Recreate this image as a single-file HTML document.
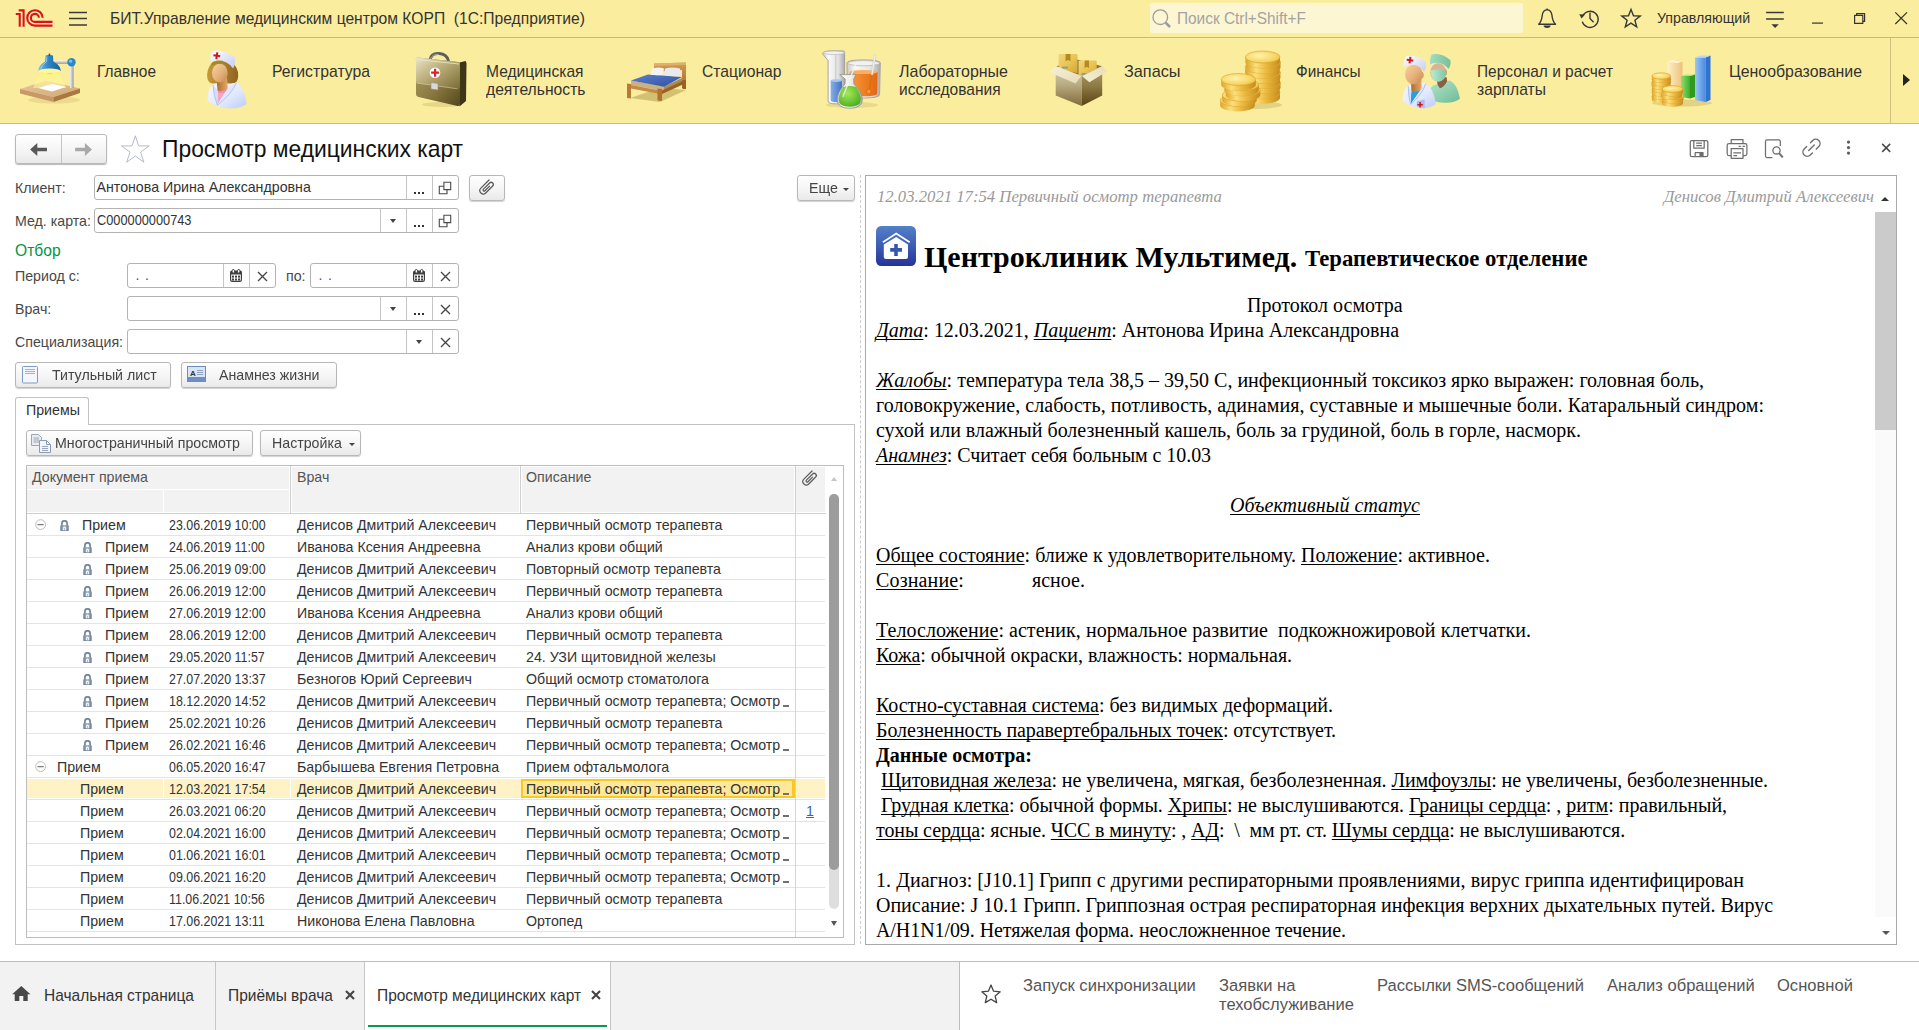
<!DOCTYPE html>
<html><head><meta charset="utf-8"><title>1C</title>
<style>
*{box-sizing:border-box;margin:0;padding:0}
html,body{width:1919px;height:1030px;overflow:hidden;background:#fff}
body{position:relative;font-family:"Liberation Sans",sans-serif;color:#333;font-size:14.2px}
.abs{position:absolute}
.sf{font-size:14.2px}
#tb{left:0;top:0;width:1919px;height:38px;background:#FBED9E;border-bottom:1px solid #ccb96c}
#nav{left:0;top:38px;width:1919px;height:86px;background:#FBED9E;border-bottom:1px solid #cabd80}
.tt{font-size:16.6px;transform:scaleX(.942);transform-origin:0 0;color:#333;white-space:pre}
.nl{position:absolute;margin-top:1px;font-size:16.6px;transform:scaleX(.948);transform-origin:0 0;line-height:18px;color:#333;white-space:pre}
.inp{position:absolute;height:25px;border:1px solid #b3b3b3;border-radius:3px;background:#fff}
.inp .sep{position:absolute;top:0;bottom:0;width:1px;background:#c4c4c4}
.inp .tx{position:absolute;left:1.5px;top:0;line-height:23px;font-size:14.2px;color:#333;white-space:pre}
.lbl{position:absolute;margin-top:-.5px;font-size:14.2px;color:#484848;white-space:pre;line-height:16px}
.btn{position:absolute;border:1px solid #b8b8b8;border-radius:3px;background:linear-gradient(#fff,#f4f4f4 60%,#e9e9e9);box-shadow:0 1px 1px rgba(0,0,0,.18);font-size:14.2px;color:#444;white-space:pre}
.ic{position:absolute}
.btn span{will-change:transform}
.dots{position:absolute;font-size:14px;font-weight:bold;color:#444;letter-spacing:0px}
.row{position:absolute;left:27px;width:798px;height:22px;border-bottom:1px solid #e4e4e4}
.row span{position:absolute;top:1px;line-height:21px;font-size:14.2px;color:#333;white-space:pre}
.doc{font-family:"Liberation Serif",serif;color:#000}
.dl{position:absolute;left:876px;font-family:"Liberation Serif",serif;font-size:20px;line-height:25px;color:#000;white-space:pre}
.dl u{text-decoration:underline;text-decoration-skip-ink:none;text-underline-offset:2px;text-decoration-thickness:1px}
.bt{position:absolute;font-size:16.2px;transform:scaleX(.957);transform-origin:0 0;color:#333;white-space:pre;line-height:18px}
.bl{position:absolute;font-size:17.2px;transform:scaleX(.963);transform-origin:0 0;color:#555;white-space:pre;line-height:20px}
</style></head>
<body>
<div id="tb" class="abs">
<svg class="abs" style="left:0;top:0" width="100" height="38" viewBox="0 0 100 38">
<g fill="none" stroke="#d8131c" stroke-width="2.1">
<path d="M15.8 14 H19.75 V26.8"/>
<path d="M18.7 10.35 H23.6 V26.8"/>
<path d="M38.9 17.7 A4 4 0 1 0 34.8 21.9 H52.5"/>
<path d="M42.6 17.7 A7.7 7.7 0 1 0 34.8 25.6 H52.5"/>
</g>
<g stroke="#3a3a3a" stroke-width="1.5"><path d="M69 12.4 H87 M69 18.6 H87 M69 24.9 H87"/></g>
</svg>
<div class="abs tt" style="left:110px;top:9px;line-height:19px">БИТ.Управление медицинским центром КОРП  (1С:Предприятие)</div>
<div class="abs" style="left:1150px;top:3px;width:373px;height:30px;background:#FDF6D3;border-radius:2px"></div><div class="abs" style="left:1177px;top:9px;font-size:16.6px;transform:scaleX(.927);transform-origin:0 0;line-height:19px;color:#a3a3a3;white-space:pre">Поиск Ctrl+Shift+F</div>
<svg class="abs" style="left:1140px;top:0" width="779" height="38" viewBox="1140 0 779 38">
<g fill="none" stroke="#9c9c9c"><circle cx="1160.3" cy="17.2" r="7.3" stroke-width="1.3"/><path d="M1165.6 22.6 L1170 27" stroke-width="2.6"/></g>
<g fill="none" stroke="#383838" stroke-width="1.4" stroke-linejoin="round">
<path d="M1538.7 24.2 C1541.6 21.6 1542 18 1542.3 15 C1542.8 11.6 1544.8 9.9 1547.1 9.9 C1549.4 9.9 1551.4 11.6 1551.9 15 C1552.2 18 1552.6 21.6 1555.5 24.2 Z"/>
<path d="M1547.1 8.6 V9.9"/>
<path d="M1583 15.4 A8.1 8.1 0 1 1 1582.3 21.6"/>
<path d="M1590 12.6 V18.6 L1593.6 22.2"/>
<path d="M1631 9.4 L1633.5 15.8 L1640.2 16.1 L1634.9 20.3 L1636.7 26.8 L1631 23.1 L1625.3 26.8 L1627.1 20.3 L1621.8 16.1 L1628.5 15.8 Z" stroke-linejoin="miter"/>
</g>
<path d="M1543.6 25.6 H1550.6 A3.5 2.3 0 0 1 1543.6 25.6 Z" fill="#383838"/>
<path d="M1579.2 14.3 L1585 14.6 L1581.6 18.6 Z" fill="#383838"/>
<g stroke="#383838" stroke-width="1.3" fill="none"><path d="M1766.1 12.5 H1783.8 M1766.1 19 H1783.8"/></g>
<path d="M1771.4 24.2 H1778.8 L1775.1 28 Z" fill="#383838"/>
<g stroke="#333" stroke-width="1.2" fill="none"><path d="M1812 23.1 H1823"/>
<path d="M1854.6 15.3 H1862.8 V23.4 H1854.6 Z" stroke-linejoin="round"/><path d="M1856.6 15 V13.6 H1864.6 V21.4 H1863"  stroke-linejoin="round"/>
<path d="M1895.3 12.4 L1907 24 M1907 12.4 L1895.3 24"/></g>
</svg>
<div class="abs" style="font-size:14.2px;left:1657px;top:9px;line-height:19px;color:#333;white-space:pre">Управляющий</div>
</div>
<div id="nav" class="abs">
<svg class="abs" style="left:0;top:0" width="1919" height="86" viewBox="0 38 1919 86"><defs>
<linearGradient id="cedge" x1="0" x2="1" y1="0" y2="0"><stop offset="0" stop-color="#dfa32a"/><stop offset=".3" stop-color="#fbe07a"/><stop offset=".6" stop-color="#ebb83e"/><stop offset="1" stop-color="#c68c1e"/></linearGradient>
<radialGradient id="ctop" cx=".4" cy=".4" r=".8"><stop offset="0" stop-color="#fff3b0"/><stop offset=".6" stop-color="#f7d561"/><stop offset="1" stop-color="#e7b23c"/></radialGradient>
<linearGradient id="skin" x1="0" x2="1" y1="0" y2="1"><stop offset="0" stop-color="#f8d2a0"/><stop offset=".55" stop-color="#e6b07a"/><stop offset="1" stop-color="#c08a52"/></linearGradient>
<linearGradient id="neck" x1="0" x2="1"><stop offset="0" stop-color="#a96a2c"/><stop offset=".6" stop-color="#d1914e"/><stop offset="1" stop-color="#e2a869"/></linearGradient>
<linearGradient id="coat" x1="0" x2="1" y1="0" y2="1"><stop offset="0" stop-color="#f4f7ff"/><stop offset=".55" stop-color="#e3eafd"/><stop offset="1" stop-color="#bccbf6"/></linearGradient>
<linearGradient id="capg" x1="0" x2="1" y1="0" y2="1"><stop offset="0" stop-color="#ffffff"/><stop offset="1" stop-color="#c3cdf0"/></linearGradient>
<linearGradient id="hair" x1="0" x2="1"><stop offset="0" stop-color="#c99a3a"/><stop offset="1" stop-color="#8e6420"/></linearGradient>
<linearGradient id="bagf" x1="0" x2="1" y1="0" y2="1"><stop offset="0" stop-color="#ebe5c9"/><stop offset=".45" stop-color="#b9ac78"/><stop offset="1" stop-color="#7a6a32"/></linearGradient>
<linearGradient id="bagb" x1="0" x2="1" y1="0" y2="1"><stop offset="0" stop-color="#b0a26c"/><stop offset=".55" stop-color="#8a7a40"/><stop offset="1" stop-color="#55471c"/></linearGradient>
<linearGradient id="wood" x1="0" x2="0" y1="0" y2="1"><stop offset="0" stop-color="#d39a52"/><stop offset="1" stop-color="#a86d2b"/></linearGradient>
<linearGradient id="boardt" x1="0" x2="1" y1="0" y2="1"><stop offset="0" stop-color="#e7c79a"/><stop offset="1" stop-color="#d2a873"/></linearGradient>
<linearGradient id="shade" x1="0" x2="1"><stop offset="0" stop-color="#7fc0e6"/><stop offset=".45" stop-color="#2f86c4"/><stop offset="1" stop-color="#175f9c"/></linearGradient>
<linearGradient id="metal" x1="0" x2="1"><stop offset="0" stop-color="#f2f2f2"/><stop offset="1" stop-color="#9a9a9a"/></linearGradient>
<linearGradient id="metalv" x1="0" x2="0" y1="0" y2="1"><stop offset="0" stop-color="#f2f2f2"/><stop offset="1" stop-color="#9a9a9a"/></linearGradient>
<linearGradient id="light" x1="0" x2="0" y1="0" y2="1"><stop offset="0" stop-color="#fff176"/><stop offset="1" stop-color="#fff7b0" stop-opacity=".55"/></linearGradient>
<linearGradient id="glass" x1="0" x2="1"><stop offset="0" stop-color="#c9c9c9"/><stop offset=".25" stop-color="#fafafa"/><stop offset=".7" stop-color="#e4e4e4"/><stop offset="1" stop-color="#a9a9a9"/></linearGradient>
<linearGradient id="orange" x1="0" x2="1"><stop offset="0" stop-color="#f79a3a"/><stop offset="1" stop-color="#e5670f"/></linearGradient>
<radialGradient id="green" cx=".4" cy=".35" r=".8"><stop offset="0" stop-color="#a4ea5a"/><stop offset="1" stop-color="#3ea516"/></radialGradient>
<linearGradient id="blueliq" x1="0" x2="1"><stop offset="0" stop-color="#86b0e8"/><stop offset="1" stop-color="#3f73c4"/></linearGradient>
<linearGradient id="boxl" x1="0" x2="0" y1="0" y2="1"><stop offset="0" stop-color="#d6cdaa"/><stop offset=".45" stop-color="#b9ad84"/><stop offset="1" stop-color="#826a38"/></linearGradient>
<linearGradient id="boxr" x1="0" x2="0" y1="0" y2="1"><stop offset="0" stop-color="#b3a472"/><stop offset=".5" stop-color="#8d7a44"/><stop offset="1" stop-color="#5a4212"/></linearGradient>
<linearGradient id="flapl" x1="0" x2="1" y1="0" y2="1"><stop offset="0" stop-color="#f7f1d8"/><stop offset="1" stop-color="#e4dbb8"/></linearGradient>
<linearGradient id="flapr" x1="0" x2="1" y1="1" y2="0"><stop offset="0" stop-color="#f6f0d6"/><stop offset="1" stop-color="#e6dcb6"/></linearGradient>
<linearGradient id="ybox" x1="0" x2="1" y1="0" y2="1"><stop offset="0" stop-color="#f3d77a"/><stop offset=".5" stop-color="#e9c455"/><stop offset="1" stop-color="#d3a632"/></linearGradient>
<linearGradient id="mask" x1="0" x2="1"><stop offset="0" stop-color="#b9ead3"/><stop offset="1" stop-color="#7fc7a3"/></linearGradient>
<linearGradient id="gcap" x1="0" x2="1"><stop offset="0" stop-color="#a4dcc0"/><stop offset="1" stop-color="#78bf9b"/></linearGradient>
<linearGradient id="gcoat" x1="0" x2="1" y1="0" y2="1"><stop offset="0" stop-color="#b6e6cc"/><stop offset="1" stop-color="#6dbb95"/></linearGradient>
<linearGradient id="bbar" x1="0" x2="1"><stop offset="0" stop-color="#9cc6f7"/><stop offset="1" stop-color="#4a8ae0"/></linearGradient>
<linearGradient id="gbar" x1="0" x2="1"><stop offset="0" stop-color="#8ee070"/><stop offset="1" stop-color="#3fae2a"/></linearGradient>
<linearGradient id="ybar" x1="0" x2="1"><stop offset="0" stop-color="#fff0c8"/><stop offset="1" stop-color="#ecc27a"/></linearGradient>
<linearGradient id="blanket" x1="0" x2="1" y1="0" y2="1"><stop offset="0" stop-color="#5a80cf"/><stop offset="1" stop-color="#2f4f9f"/></linearGradient>
</defs><g><ellipse cx="54" cy="100" rx="26" ry="3.5" fill="#b9a55a" opacity=".25"/><path d="M20 89 L46 80.5 L80 88.5 L53.5 97 Z" fill="url(#boardt)"/><path d="M20 89 L53.5 97 L53.5 102 L20 93.5 Z" fill="#c89866"/><path d="M53.5 97 L80 88.5 L80 93 L53.5 102 Z" fill="#a9773f"/><path d="M41 70 L58 70 L66 88 L33 88 Z" fill="url(#light)"/><path d="M38 88 L52 84 L66 87 L52 91.5 Z" fill="#ffffff"/><rect x="70" y="64" width="3.6" height="24" fill="url(#metal)"/><rect x="53" y="60.5" width="18" height="3.4" fill="url(#metalv)"/><circle cx="71.5" cy="62.3" r="4.2" fill="#2f86c4"/><circle cx="70.6" cy="61.2" r="1.6" fill="#7fc0e6"/><path d="M45.6 56 Q45.6 55 49.3 55 Q53 55 53 56 L53.4 61.5 Q60.5 65.5 60.8 70.8 Q49.5 76 38.2 70.8 Q38.5 65.5 45.2 61.5 Z" fill="url(#shade)"/><path d="M46.8 56.5 L46.6 61.5 Q42 64.5 40.5 69" fill="none" stroke="#a9d8f2" stroke-width="1" opacity=".8"/><rect x="48.6" y="53.6" width="1.6" height="2.4" fill="#175f9c"/><ellipse cx="49.5" cy="71" rx="11" ry="2.6" fill="#fff59a"/></g><g><path d="M212.5 62 Q205.5 70 207.5 79 Q209.5 85 216 83 L231 83.5 Q238 84 238.2 76 Q238.5 67 231 62 Q222 58 212.5 62 Z" fill="url(#hair)"/><path d="M207.6 100.4 Q207.6 88.5 212.5 85 L218 83.5 L230 84 L236.5 82.6 Q244.5 87 246.7 103.8 Q241 108.8 230 108.6 Q216 107.5 207.6 100.4 Z" fill="url(#coat)"/><path d="M216.5 79 L227 78 L227.8 89 L222 96 L217.6 91 Z" fill="url(#neck)"/><path d="M217.6 90.5 Q222 92.5 227.6 88.8 L217.3 104.5 Z" fill="#f7a6c2"/><path d="M217.6 90.5 Q222 92.5 227.6 88.8 L226 91.5 Q221.5 94.3 217.6 92.6 Z" fill="#f47fa8" opacity=".7"/><path d="M213 85 L217.6 90.8 L217.4 105.2 Q213.5 96 213 85 Z" fill="#d6e0fb"/><path d="M236.3 82.8 Q232 94 217.5 105.3 L227.5 88.6 Z" fill="#dfe7fd"/><path d="M213 85 Q213.6 96 217.4 105.2 Q231.5 94.5 236.3 82.8" fill="none" stroke="#a9bdf3" stroke-width=".9"/><ellipse cx="219.8" cy="73" rx="7.9" ry="9.4" fill="url(#skin)"/><path d="M211.5 63.5 Q216 59.8 224 62.3 L224.5 64.5 Q217 62.5 211.6 65.5 Z" fill="#9d8a2d"/><path d="M210.3 62.4 Q210 55 212.3 51.1 Q223 48.8 234.8 57.3 Q236 63 233.1 68.5 Q227.5 60.5 217.4 60 Q213 60.2 210.3 62.4 Z" fill="url(#capg)"/><path d="M215.8 52.3 h2 v2.4 h2.4 v2 h-2.4 v2.4 h-2 v-2.4 h-2.4 v-2 h2.4 z" fill="#cf1820" transform="rotate(8 216.8 55.7)"/></g><g><ellipse cx="442" cy="104.5" rx="20" ry="2.5" fill="#a99446" opacity=".25"/><path d="M430 60 Q431 53 439 53.5 Q447 54 448.5 61" fill="none" stroke="#5d5d5d" stroke-width="3"/><path d="M430.5 59 Q432 54 439 54.3" fill="none" stroke="#a5a5a5" stroke-width="1"/><path d="M459.5 62.5 L465.5 61 Q466.5 62 466.5 64 L466 101 L459.5 106.5 Z" fill="#3f3617"/><path d="M416 60 Q415 57.5 418 57.5 L458 62 Q460 62.2 460 64.5 L460 104 Q460 106.5 457.5 106 L418.5 97 Q416 96.5 416 94 Z" fill="url(#bagb)"/><path d="M416 60 Q415 57.5 418 57.5 L458 62 Q460 62.2 460 64.5 L460 86.5 Q460 89.5 457 89 L418 83.5 Q416 83 416 81 Z" fill="url(#bagf)"/><path d="M417 59.5 L459 64" stroke="#efe8c8" stroke-width="1" fill="none" opacity=".8"/><path d="M416.5 83 L457.5 88.8" stroke="#d9d0a6" stroke-width=".8" fill="none" opacity=".7"/><circle cx="435" cy="72.7" r="5.3" fill="#ffffff"/><path d="M434 68.7 h2.2 v2.9 h2.9 v2.2 h-2.9 v2.9 h-2.2 v-2.9 h-2.9 v-2.2 h2.9 z" fill="#e0202a"/><path d="M431 82.5 L438 83.5 L438 90 L431 89 Z" fill="#d9d9d9" stroke="#8c8c8c" stroke-width=".6"/></g><g><path d="M630 98 L660 102 L686 90 L660 88 Z" fill="#a08c3c" opacity=".45"/><path d="M654 63.5 L686 62.5 L686 88 L682 88 L682 70 L654 72 Z" fill="url(#wood)"/><path d="M654 63.5 L686 62.5 L686 65 L654 66 Z" fill="#e0b06a"/><rect x="682.5" y="80" width="3.5" height="9" fill="#9a6224"/><path d="M631 80.5 L664 86.5 L664 91 L631 85 Z" fill="#c9b184"/><path d="M664 86.5 L682 78 L682 82 L664 91 Z" fill="#a78d5c"/><path d="M631 80.5 L648 74.5 L682 77 L664 86.8 Z" fill="url(#blanket)"/><path d="M652 69 Q658 66.5 664 68.5 L663 74.5 Q657 76 650.5 74.5 Z" fill="#f3f3f3"/><path d="M665 68.5 Q672 66.5 680 68.5 L681 76 Q672 77 664 75 Z" fill="#e9e9ee"/><path d="M627 83.5 L631 84 L631 98.5 L627 98 Z" fill="#b77b35"/><path d="M631 85 L660 90.5 L660 94 L631 88.5 Z" fill="#c48a44"/><path d="M657.5 88.5 L662 89 L662 101 L657.5 100.5 Z" fill="#b0722d"/><path d="M662 90.5 L684 80.5 L684 84 L662 94 Z" fill="#99601f"/></g><g><ellipse cx="852" cy="105" rx="26" ry="3" fill="#a99446" opacity=".22"/><path d="M822.4 53.6 Q823 51.2 830 50.9 L843 50.9 Q845.3 51.2 844.6 53.5 L844.6 101 Q844.6 103.9 836.4 103.9 Q828.1 103.9 828.1 101 L828.1 60.7 Z" fill="url(#glass)" stroke="#9d9d9d" stroke-width=".9"/><path d="M830.7 80.5 L841.9 80.5 L841.9 100 Q841.9 102 836.3 102 Q830.7 102 830.7 100 Z" fill="url(#blueliq)"/><ellipse cx="836.3" cy="80.6" rx="5.6" ry="1.4" fill="#a9c6ef"/><path d="M835.8 55 V80" stroke="#bdbdbd" stroke-width="1.2" opacity=".7"/><ellipse cx="834" cy="52.8" rx="10.5" ry="1.7" fill="#f3f3f3" stroke="#b0b0b0" stroke-width=".6"/><path d="M846.9 63 Q846.9 59.9 863.5 59.9 Q880.3 59.9 880.3 63 L879.6 94.5 Q879.6 98 863.5 98 Q847.6 98 847.6 94.5 Z" fill="url(#glass)" stroke="#9d9d9d" stroke-width=".9" opacity=".95"/><path d="M849.6 72 L877.6 72 L877.2 93.4 Q877.2 96.2 863.5 96.2 Q850 96.2 850 93.4 Z" fill="url(#orange)"/><ellipse cx="863.6" cy="72" rx="14" ry="2.1" fill="#f9ae62"/><ellipse cx="863.6" cy="63.2" rx="15.8" ry="2.6" fill="#f2f2f2" stroke="#b0b0b0" stroke-width=".7"/><path d="M874.2 54.6 L876 54.8 L872.8 75 L871.2 74.8 Z" fill="#efefef" stroke="#c4c4c4" stroke-width=".4"/><path d="M871.8 75 L869.2 90" stroke="#d8700f" stroke-width="1.3" opacity=".9"/><circle cx="868.8" cy="91.6" r="2.3" fill="#f79a3a" stroke="#c9610c" stroke-width=".6"/><path d="M839.7 74.6 L856 74.6 L853.7 79 L853.9 84 Q862.3 92.5 862.3 99.5 Q862.3 108.3 849.6 108.3 Q837.2 108.3 837.2 99.5 Q837.2 92.5 845 84 L845.2 79 Z" fill="url(#glass)" stroke="#959595" stroke-width=".9"/><path d="M843.2 87 Q849.5 85 856 87 Q860.8 93.5 860.8 99.3 Q860.8 106.8 849.6 106.8 Q838.7 106.8 838.7 99.3 Q838.7 93.5 843.2 87 Z" fill="url(#green)"/><path d="M855.3 63 L856.8 63.6 L843.6 97 L842.2 96.4 Z" fill="#f4f4f4" opacity=".8"/></g><g><path d="M1055.7 66.5 L1077 59.5 L1102.2 66.2 L1081.7 76.1 Z" fill="#8a763c"/><path d="M1058.6 55.2 Q1058.6 54 1060 54 L1076 54 Q1077.5 54 1077.5 55.2 L1077.5 73 L1058.6 70 Z" fill="url(#ybox)"/><path d="M1065.6 54 H1070.5 V61.2 L1068 60 L1065.6 61.2 Z" fill="#b48a22"/><path d="M1078.5 61.6 Q1078.5 60.4 1080 60.4 L1095.2 60.4 Q1096.7 60.4 1096.7 61.6 L1096.7 72 L1082 77 L1078.5 75 Z" fill="url(#ybox)"/><path d="M1084.6 60.4 H1089 V68 L1086.8 66.8 L1084.6 68 Z" fill="#b48a22"/><rect x="1062" y="66.6" width="6" height="2" fill="#7fa58c"/><rect x="1081.5" y="73" width="5" height="2" fill="#7fa58c"/><path d="M1055.7 66.5 L1081.7 76.1 L1081.7 105.9 L1055.7 95.4 Z" fill="url(#boxl)"/><path d="M1081.7 76.1 L1102.2 66.2 L1102.2 95.4 L1081.7 105.9 Z" fill="url(#boxr)"/><path d="M1049.3 72.3 L1056.3 66.2 L1081.2 76.1 L1075.6 83.5 Z" fill="url(#flapl)"/><path d="M1082 76.1 L1101.9 66.2 L1107.3 71.3 L1089.4 82.2 Z" fill="url(#flapr)"/></g><g><ellipse cx="1252" cy="105" rx="30" ry="4" fill="#a99446" opacity=".3"/><path d="M1245.4 92.7 v5.1 a17.3 6.0 0 0 0 34.6 0 v-5.1 z" fill="url(#cedge)"/><ellipse cx="1262.7" cy="92.7" rx="17.3" ry="6.0" fill="url(#ctop)" stroke="#d9a02c" stroke-width="0.6"/><path d="M1245.1 87.6 v5.1 a17.3 6.0 0 0 0 34.6 0 v-5.1 z" fill="url(#cedge)"/><ellipse cx="1262.4" cy="87.6" rx="17.3" ry="6.0" fill="url(#ctop)" stroke="#d9a02c" stroke-width="0.6"/><path d="M1245.9 82.5 v5.1 a17.3 6.0 0 0 0 34.6 0 v-5.1 z" fill="url(#cedge)"/><ellipse cx="1263.2" cy="82.5" rx="17.3" ry="6.0" fill="url(#ctop)" stroke="#d9a02c" stroke-width="0.6"/><path d="M1245.4 77.4 v5.1 a17.3 6.0 0 0 0 34.6 0 v-5.1 z" fill="url(#cedge)"/><ellipse cx="1262.7" cy="77.4" rx="17.3" ry="6.0" fill="url(#ctop)" stroke="#d9a02c" stroke-width="0.6"/><path d="M1245.8 72.3 v5.1 a17.3 6.0 0 0 0 34.6 0 v-5.1 z" fill="url(#cedge)"/><ellipse cx="1263.1" cy="72.3" rx="17.3" ry="6.0" fill="url(#ctop)" stroke="#d9a02c" stroke-width="0.6"/><path d="M1245.1 67.2 v5.1 a17.3 6.0 0 0 0 34.6 0 v-5.1 z" fill="url(#cedge)"/><ellipse cx="1262.4" cy="67.2" rx="17.3" ry="6.0" fill="url(#ctop)" stroke="#d9a02c" stroke-width="0.6"/><path d="M1245.9 62.1 v5.1 a17.3 6.0 0 0 0 34.6 0 v-5.1 z" fill="url(#cedge)"/><ellipse cx="1263.2" cy="62.1" rx="17.3" ry="6.0" fill="url(#ctop)" stroke="#d9a02c" stroke-width="0.6"/><path d="M1245.4 57.0 v5.1 a17.3 6.0 0 0 0 34.6 0 v-5.1 z" fill="url(#cedge)"/><ellipse cx="1262.7" cy="57.0" rx="17.3" ry="6.0" fill="url(#ctop)" stroke="#d9a02c" stroke-width="0.6"/><path d="M1220.2 100.3 v5.2 a17.3 6.0 0 0 0 34.6 0 v-5.2 z" fill="url(#cedge)"/><ellipse cx="1237.5" cy="100.3" rx="17.3" ry="6.0" fill="url(#ctop)" stroke="#d9a02c" stroke-width="0.6"/><path d="M1222.2 95.1 v5.2 a17.3 6.0 0 0 0 34.6 0 v-5.2 z" fill="url(#cedge)"/><ellipse cx="1239.5" cy="95.1" rx="17.3" ry="6.0" fill="url(#ctop)" stroke="#d9a02c" stroke-width="0.6"/><path d="M1225.7 89.9 v5.2 a17.3 6.0 0 0 0 34.6 0 v-5.2 z" fill="url(#cedge)"/><ellipse cx="1243.0" cy="89.9" rx="17.3" ry="6.0" fill="url(#ctop)" stroke="#d9a02c" stroke-width="0.6"/><path d="M1224.2 84.7 v5.2 a17.3 6.0 0 0 0 34.6 0 v-5.2 z" fill="url(#cedge)"/><ellipse cx="1241.5" cy="84.7" rx="17.3" ry="6.0" fill="url(#ctop)" stroke="#d9a02c" stroke-width="0.6"/><path d="M1221.2 79.5 v5.2 a17.3 6.0 0 0 0 34.6 0 v-5.2 z" fill="url(#cedge)"/><ellipse cx="1238.5" cy="79.5" rx="17.3" ry="6.0" fill="url(#ctop)" stroke="#d9a02c" stroke-width="0.6"/></g><g><path d="M1428 98 Q1429 89 1433 85.5 L1440 83 L1449.8 80.4 Q1457.5 84 1460 98.8 Q1454 103.2 1445 102.8 Q1434 102.6 1428 98 Z" fill="url(#gcoat)"/><path d="M1436.5 79 L1446.5 77 L1447.2 81 Q1444 87.5 1439.9 88.3 Q1437.2 86 1437 81.6 Z" fill="#8a5f43"/><ellipse cx="1438.2" cy="72.4" rx="7.9" ry="9.3" fill="#d6b596"/><path d="M1445.3 68.5 Q1447.6 70 1446.8 74.5 L1445.3 76 Z" fill="#c79f80"/><path d="M1431 70.6 Q1438 68.4 1445.2 70.8 L1445.8 75 Q1443.5 81.6 1438 81.4 Q1432.6 81 1431.2 75 Z" fill="url(#mask)"/><path d="M1430 64.5 Q1429.8 58 1431.6 54.6 Q1441 52 1450.4 60.2 Q1451.2 65 1448.5 69.1 Q1444 63.2 1437 62.8 Q1432.5 62.8 1430 64.5 Z" fill="url(#gcap)"/><path d="M1402.6 100.8 Q1402.8 89.5 1408.2 85.6 L1413 84 L1421 82 L1426 83.6 Q1433.5 88 1435.9 104.1 Q1430 108.8 1421.4 108.4 Q1409.5 107 1402.6 100.8 Z" fill="url(#coat)"/><path d="M1411 80 L1421.4 78 L1421.6 88.5 L1416 96 L1411.4 91 Z" fill="url(#neck)"/><path d="M1411.2 91.2 Q1416 93 1420.7 89.8 L1410.6 104.3 Z" fill="#2a9fd8"/><path d="M1408.2 85.8 L1411.3 91.2 L1410.6 104.5 Q1408 96 1408.2 85.8 Z" fill="#d6e0fb"/><path d="M1425.8 83.7 Q1422.5 94 1410.7 104.6 L1420.6 89.8 Z" fill="#dfe7fd"/><path d="M1408.2 85.8 Q1408.2 96 1410.6 104.5 Q1422 94.5 1425.8 83.7" fill="none" stroke="#a9bdf3" stroke-width=".9"/><path d="M1416.8 101.2 L1424.7 99.6 L1424.7 108.2 L1416.8 106.6 Z" fill="#a9bdf3"/><path d="M1419.3 102 h1.6 v1.9 h1.9 v1.6 h-1.9 v1.9 h-1.6 v-1.9 h-1.9 v-1.6 h1.9 z" fill="#cf1820"/><ellipse cx="1413.8" cy="74.4" rx="8.8" ry="10" fill="url(#skin)"/><path d="M1421.8 71.5 Q1424.4 72.5 1423.6 77 L1421.8 79 Z" fill="#d9a066"/><path d="M1403.9 67.1 Q1403.6 60 1405.9 56.2 Q1416 53.8 1426 61.8 Q1427 67 1424 72.1 Q1420 65.4 1413.5 64.8 Q1407.5 64.6 1403.9 67.1 Z" fill="url(#capg)"/><path d="M1409 56.9 h2 v2.3 h2.3 v2 h-2.3 v2.3 h-2 v-2.3 h-2.3 v-2 h2.3 z" fill="#cf1820" transform="rotate(8 1410 60.2)"/></g><g><ellipse cx="1682" cy="103" rx="30" ry="3.5" fill="#a99446" opacity=".3"/><path d="M1667.5 61.5 L1677 60 L1682.5 61.5 L1682.5 92 L1667.5 92 Z" fill="url(#ybar)"/><path d="M1667.5 61.5 L1673 60 L1682.5 61.5 L1677 63 Z" fill="#fff6dc"/><path d="M1681 76 L1690 76 L1690 98.5 L1681 97 Z" fill="url(#gbar)"/><path d="M1690 76 L1695 74.5 L1695 97 L1690 98.5 Z" fill="#2f9a20"/><path d="M1681 76 L1686 74.5 L1695 74.5 L1690 76 Z" fill="#a6ea8c"/><path d="M1695 57.5 L1705.5 57.5 L1705.5 102 L1695 100 Z" fill="url(#bbar)"/><path d="M1705.5 57.5 L1710.5 55.5 L1710.5 100 L1705.5 102 Z" fill="#2f72d2"/><path d="M1695 57.5 L1700 55.5 L1710.5 55.5 L1705.5 57.5 Z" fill="#b9d8fa"/><path d="M1651.8 96.4 v3.4 a9.4 3.2 0 0 0 18.8 0 v-3.4 z" fill="url(#cedge)"/><ellipse cx="1661.2" cy="96.4" rx="9.4" ry="3.2" fill="url(#ctop)" stroke="#d9a02c" stroke-width="0.6"/><path d="M1652.1 93.0 v3.4 a9.4 3.2 0 0 0 18.8 0 v-3.4 z" fill="url(#cedge)"/><ellipse cx="1661.5" cy="93.0" rx="9.4" ry="3.2" fill="url(#ctop)" stroke="#d9a02c" stroke-width="0.6"/><path d="M1651.8 89.6 v3.4 a9.4 3.2 0 0 0 18.8 0 v-3.4 z" fill="url(#cedge)"/><ellipse cx="1661.2" cy="89.6" rx="9.4" ry="3.2" fill="url(#ctop)" stroke="#d9a02c" stroke-width="0.6"/><path d="M1652.1 86.2 v3.4 a9.4 3.2 0 0 0 18.8 0 v-3.4 z" fill="url(#cedge)"/><ellipse cx="1661.5" cy="86.2" rx="9.4" ry="3.2" fill="url(#ctop)" stroke="#d9a02c" stroke-width="0.6"/><path d="M1651.6 82.8 v3.4 a9.4 3.2 0 0 0 18.8 0 v-3.4 z" fill="url(#cedge)"/><ellipse cx="1661.0" cy="82.8" rx="9.4" ry="3.2" fill="url(#ctop)" stroke="#d9a02c" stroke-width="0.6"/><path d="M1652.1 79.4 v3.4 a9.4 3.2 0 0 0 18.8 0 v-3.4 z" fill="url(#cedge)"/><ellipse cx="1661.5" cy="79.4" rx="9.4" ry="3.2" fill="url(#ctop)" stroke="#d9a02c" stroke-width="0.6"/><path d="M1651.8 76.0 v3.4 a9.4 3.2 0 0 0 18.8 0 v-3.4 z" fill="url(#cedge)"/><ellipse cx="1661.2" cy="76.0" rx="9.4" ry="3.2" fill="url(#ctop)" stroke="#d9a02c" stroke-width="0.6"/><path d="M1662.0 99.8 v3.6 a10.5 3.4 0 0 0 21.0 0 v-3.6 z" fill="url(#cedge)"/><ellipse cx="1672.5" cy="99.8" rx="10.5" ry="3.4" fill="url(#ctop)" stroke="#d9a02c" stroke-width="0.6"/><path d="M1662.5 96.2 v3.6 a10.5 3.4 0 0 0 21.0 0 v-3.6 z" fill="url(#cedge)"/><ellipse cx="1673.0" cy="96.2" rx="10.5" ry="3.4" fill="url(#ctop)" stroke="#d9a02c" stroke-width="0.6"/><path d="M1661.0 92.6 v3.6 a10.5 3.4 0 0 0 21.0 0 v-3.6 z" fill="url(#cedge)"/><ellipse cx="1671.5" cy="92.6" rx="10.5" ry="3.4" fill="url(#ctop)" stroke="#d9a02c" stroke-width="0.6"/><path d="M1662.0 89.0 v3.6 a10.5 3.4 0 0 0 21.0 0 v-3.6 z" fill="url(#cedge)"/><ellipse cx="1672.5" cy="89.0" rx="10.5" ry="3.4" fill="url(#ctop)" stroke="#d9a02c" stroke-width="0.6"/></g></svg>
<div class="nl" style="left:97.0px;top:24px;transform:scaleX(0.9305)">Главное</div>
<div class="nl" style="left:272.3px;top:24px;transform:scaleX(0.9493)">Регистратура</div>
<div class="nl" style="left:486.3px;top:24px;transform:scaleX(0.9383)">Медицинская</div>
<div class="nl" style="left:486.3px;top:42px;transform:scaleX(0.9452)">деятельность</div>
<div class="nl" style="left:702.3px;top:24px;transform:scaleX(0.9436)">Стационар</div>
<div class="nl" style="left:898.7px;top:24px;transform:scaleX(0.9634)">Лабораторные</div>
<div class="nl" style="left:898.7px;top:42px;transform:scaleX(0.9355)">исследования</div>
<div class="nl" style="left:1124.3px;top:24px;transform:scaleX(0.9791)">Запасы</div>
<div class="nl" style="left:1296.3px;top:24px;transform:scaleX(0.9258)">Финансы</div>
<div class="nl" style="left:1476.8px;top:24px;transform:scaleX(0.9305)">Персонал и расчет</div>
<div class="nl" style="left:1476.8px;top:42px;transform:scaleX(0.9436)">зарплаты</div>
<div class="nl" style="left:1728.8px;top:24px;transform:scaleX(0.9563)">Ценообразование</div>
<div class="abs" style="left:1890px;top:0;width:1px;height:85px;background:#cfc07f"></div><div class="abs" style="left:1903px;top:36px;width:0;height:0;border-top:6px solid transparent;border-bottom:6px solid transparent;border-left:7px solid #222"></div>
</div>
<div class="btn" style="left:15px;top:134px;width:92px;height:30px;box-shadow:0 1px 1px rgba(0,0,0,.28)"></div><div class="abs" style="left:61px;top:135px;width:1px;height:28px;background:#c4c4c4"></div><svg class="abs" style="left:0;top:128px" width="170" height="42" viewBox="0 128 170 42"><path d="M30.1 149.5 L37.3 143 V147.8 H47 V151.2 H37.3 V155.9 Z" fill="#595959"/><path d="M92 149.5 L84.9 143 V147.8 H75.1 V151.2 H84.9 V155.9 Z" fill="#a9a9a9"/><path d="M135.3 135.8 L138.6 145.9 L149.2 145.9 L140.6 152.1 L143.9 162.2 L135.3 156.0 L126.7 162.2 L130.0 152.1 L121.4 145.9 L132.0 145.9 Z" fill="#fff" stroke="#b3bdc8" stroke-width="1" stroke-linejoin="miter"/></svg><div class="abs" style="left:162px;top:135px;font-size:23.25px;transform:scaleX(.983);transform-origin:0 0;line-height:28px;color:#111;white-space:pre">Просмотр медицинских карт</div>
<div class="lbl" style="left:15px;top:180px">Клиент:</div><div class="inp" style="left:94px;top:175px;width:365px"><div class="sep" style="left:311px"></div><div class="sep" style="left:337px"></div><div class="tx">Антонова Ирина Александровна</div></div><div class="abs" style="left:414px;top:192px;width:2px;height:2px;background:#333;box-shadow:4px 0 0 #333,8px 0 0 #333"></div><svg class="abs" style="left:438px;top:181px" width="14" height="14" viewBox="0 0 14 14"><path d="M5.9 1.3 H12.7 V8.6 H5.9 Z" fill="#fff" stroke="#4a4a4a" stroke-width="1.1"/><path d="M5.9 5.3 H1.3 V12.7 H9 V8.6" fill="none" stroke="#4a4a4a" stroke-width="1.1"/></svg><div class="btn" style="left:469px;top:175px;width:36px;height:26px"></div><svg class="abs" style="left:474.5px;top:175.0px" width="24" height="24" viewBox="-12 -12 24 24"><path transform="rotate(-45) scale(.9)" d="M7.1 -3.9L-5.7 -3.9A3.8 3.8 0 0 0 -5.7 3.7L5.2 3.7A2.4 2.4 0 0 0 5.2 -1.1L-4.5 -1.1A1.2 1.2 0 0 0 -4.5 1.3L2.7 1.3" fill="none" stroke="#5a5a5a" stroke-width="1.4" stroke-linecap="round"/></svg><div class="btn" style="left:797px;top:175px;width:58px;height:26px"><span style="position:absolute;left:11px;top:0;line-height:25px">Еще</span></div><div class="abs" style="left:843px;top:188px;width:0;height:0;border-left:3px solid transparent;border-right:3px solid transparent;border-top:3px solid #444"></div>
<div class="lbl" style="left:15px;top:213px">Мед. карта:</div><div class="inp" style="left:94px;top:208px;width:365px"><div class="sep" style="left:285px"></div><div class="sep" style="left:311px"></div><div class="sep" style="left:337px"></div><div class="tx"><span style="display:inline-block;transform:scaleX(.9);transform-origin:0 50%">C000000000743</span></div></div><div class="abs" style="left:389px;top:219px;width:0;height:0;border-left:3.5px solid transparent;border-right:3.5px solid transparent;border-top:4px solid #444;margin-left:.5px"></div><div class="abs" style="left:414px;top:225px;width:2px;height:2px;background:#333;box-shadow:4px 0 0 #333,8px 0 0 #333"></div><svg class="abs" style="left:438px;top:214px" width="14" height="14" viewBox="0 0 14 14"><path d="M5.9 1.3 H12.7 V8.6 H5.9 Z" fill="#fff" stroke="#4a4a4a" stroke-width="1.1"/><path d="M5.9 5.3 H1.3 V12.7 H9 V8.6" fill="none" stroke="#4a4a4a" stroke-width="1.1"/></svg><div class="abs" style="left:15px;top:241px;font-size:15.6px;line-height:19px;color:#009646;white-space:pre">Отбор</div>
<div class="lbl" style="left:15px;top:268px">Период с:</div><div class="inp" style="left:127px;top:263px;width:149px"><div class="sep" style="left:95px"></div><div class="sep" style="left:121px"></div><div class="tx"><span style="letter-spacing:5.6px;color:#555;margin-left:6px">..</span></div></div><svg class="abs" style="left:230px;top:269px" width="12" height="13" viewBox="0 0 12 13"><rect x="0.6" y="2.1" width="10.8" height="10.3" rx="1.6" fill="#fff" stroke="#3f3f3f" stroke-width="1.2"/><rect x="0.6" y="2.1" width="10.8" height="3.4" fill="#3f3f3f"/><rect x="2.1" y="0.5" width="2.4" height="3.6" rx="1.2" fill="#fff" stroke="#3f3f3f" stroke-width="1"/><rect x="7.5" y="0.5" width="2.4" height="3.6" rx="1.2" fill="#fff" stroke="#3f3f3f" stroke-width="1"/><g fill="#3f3f3f"><rect x="2" y="6.6" width="2" height="2"/><rect x="5" y="6.6" width="2" height="2"/><rect x="8" y="6.6" width="2" height="2"/><rect x="2" y="9.5" width="2" height="2"/><rect x="5" y="9.5" width="2" height="2"/><rect x="8" y="9.5" width="2" height="2"/></g></svg><svg class="abs" style="left:257px;top:271px" width="11" height="11" viewBox="0 0 11 11"><path d="M1 1 L10 10 M10 1 L1 10" stroke="#444" stroke-width="1.3" fill="none"/></svg><div class="lbl" style="left:286px;top:268px">по:</div><div class="inp" style="left:310px;top:263px;width:149px"><div class="sep" style="left:95px"></div><div class="sep" style="left:121px"></div><div class="tx"><span style="letter-spacing:5.6px;color:#555;margin-left:6px">..</span></div></div><svg class="abs" style="left:413px;top:269px" width="12" height="13" viewBox="0 0 12 13"><rect x="0.6" y="2.1" width="10.8" height="10.3" rx="1.6" fill="#fff" stroke="#3f3f3f" stroke-width="1.2"/><rect x="0.6" y="2.1" width="10.8" height="3.4" fill="#3f3f3f"/><rect x="2.1" y="0.5" width="2.4" height="3.6" rx="1.2" fill="#fff" stroke="#3f3f3f" stroke-width="1"/><rect x="7.5" y="0.5" width="2.4" height="3.6" rx="1.2" fill="#fff" stroke="#3f3f3f" stroke-width="1"/><g fill="#3f3f3f"><rect x="2" y="6.6" width="2" height="2"/><rect x="5" y="6.6" width="2" height="2"/><rect x="8" y="6.6" width="2" height="2"/><rect x="2" y="9.5" width="2" height="2"/><rect x="5" y="9.5" width="2" height="2"/><rect x="8" y="9.5" width="2" height="2"/></g></svg><svg class="abs" style="left:440px;top:271px" width="11" height="11" viewBox="0 0 11 11"><path d="M1 1 L10 10 M10 1 L1 10" stroke="#444" stroke-width="1.3" fill="none"/></svg><div class="lbl" style="left:15px;top:301px">Врач:</div><div class="inp" style="left:127px;top:296px;width:332px"><div class="sep" style="left:252px"></div><div class="sep" style="left:278px"></div><div class="sep" style="left:304px"></div></div><div class="abs" style="left:389px;top:307px;width:0;height:0;border-left:3.5px solid transparent;border-right:3.5px solid transparent;border-top:4px solid #444;margin-left:.5px"></div><div class="abs" style="left:414px;top:313px;width:2px;height:2px;background:#333;box-shadow:4px 0 0 #333,8px 0 0 #333"></div><svg class="abs" style="left:440px;top:304px" width="11" height="11" viewBox="0 0 11 11"><path d="M1 1 L10 10 M10 1 L1 10" stroke="#444" stroke-width="1.3" fill="none"/></svg><div class="lbl" style="left:15px;top:334px">Специализация:</div><div class="inp" style="left:127px;top:329px;width:332px"><div class="sep" style="left:278px"></div><div class="sep" style="left:304px"></div></div><div class="abs" style="left:415px;top:340px;width:0;height:0;border-left:3.5px solid transparent;border-right:3.5px solid transparent;border-top:4px solid #444;margin-left:.5px"></div><svg class="abs" style="left:440px;top:337px" width="11" height="11" viewBox="0 0 11 11"><path d="M1 1 L10 10 M10 1 L1 10" stroke="#444" stroke-width="1.3" fill="none"/></svg>
<div class="btn" style="left:15px;top:362px;width:156px;height:26px"><span style="position:absolute;left:36px;top:0;line-height:25px">Титульный лист</span></div><svg class="abs" style="left:22px;top:366px" width="17" height="18" viewBox="0 0 17 18"><rect x="0.5" y="0.5" width="15" height="16.5" rx="1" fill="#f3f7fb" stroke="#7f9bbf"/><path d="M3 3.5 H13 M3 5.5 H13 M3 7.5 H13" stroke="#a3b3c6" stroke-width="1"/></svg><div class="btn" style="left:181px;top:362px;width:156px;height:26px"><span style="position:absolute;left:37px;top:0;line-height:25px">Анамнез жизни</span></div><svg class="abs" style="left:187px;top:366px" width="20" height="17" viewBox="0 0 20 17"><rect x="0.5" y="0.5" width="18" height="15" fill="#d9e5f4" stroke="#6f8dba"/><rect x="1" y="11" width="17" height="4.5" fill="#6f8fc2"/><text x="3" y="9.5" font-family="Liberation Sans" font-weight="bold" font-size="8" fill="#333">A</text><path d="M10 4.5 H16 M10 6.5 H16 M10 8.5 H16" stroke="#8fa3c2" stroke-width="1"/></svg>
<div class="abs" style="left:15px;top:424px;width:840px;height:521px;border:1px solid #c2c2c2"></div><div class="abs" style="left:15px;top:397px;width:74px;height:28px;border:1px solid #c2c2c2;border-bottom:none;border-radius:3px 3px 0 0;background:#fff"></div><div class="abs" style="left:26px;top:402px;font-size:14.2px;line-height:17px;color:#333">Приемы</div>
<div class="btn" style="left:26px;top:430px;width:227px;height:26px"><span style="position:absolute;left:28px;top:0;line-height:25px">Многостраничный просмотр</span></div><svg class="abs" style="left:31px;top:434px" width="21" height="19" viewBox="0 0 21 19"><path d="M0.5 0.5 H7.5 L10.5 3.5 V11.5 H0.5 Z" fill="#e9edf2" stroke="#9aa7b6"/><path d="M2.5 4 H8 M2.5 6 H8 M2.5 8 H8" stroke="#9aa7b6"/><path d="M8.5 6.5 H15.5 L19.5 10.5 V18.5 H8.5 Z" fill="#f2f5f9" stroke="#8b9db3"/><path d="M15.5 6.5 V10.5 H19.5" fill="none" stroke="#8b9db3"/><path d="M11 12.5 H17 M11 14.5 H17 M11 16.5 H17" stroke="#9aa7b6"/></svg><div class="btn" style="left:260px;top:430px;width:101px;height:26px"><span style="position:absolute;left:11px;top:0;line-height:25px">Настройка</span></div><div class="abs" style="left:348.5px;top:443px;width:0;height:0;border-left:3px solid transparent;border-right:3px solid transparent;border-top:3px solid #444"></div>
<div class="abs" style="left:26px;top:465px;width:818px;height:473px;border:1px solid #bdbdbd;background:#fff"></div><div class="abs" style="left:27px;top:467px;width:262px;height:22px;background:#f2f2f2"></div><div class="abs" style="left:27px;top:490px;width:136px;height:22px;background:#f2f2f2"></div><div class="abs" style="left:164px;top:490px;width:125px;height:22px;background:#f2f2f2"></div><div class="abs" style="left:292px;top:467px;width:227px;height:45px;background:#f2f2f2"></div><div class="abs" style="left:522px;top:467px;width:272px;height:45px;background:#f2f2f2"></div><div class="abs" style="left:796px;top:467px;width:29px;height:45px;background:#f2f2f2"></div><div class="abs" style="left:27px;top:513px;width:799px;height:1px;background:#d0d0d0"></div><div class="abs" style="left:290px;top:466px;width:1px;height:47px;background:#cfcfcf"></div><div class="abs" style="left:520px;top:466px;width:1px;height:47px;background:#cfcfcf"></div><div class="abs" style="left:795px;top:466px;width:1px;height:47px;background:#cfcfcf"></div><div class="abs" style="left:32px;top:469px;font-size:14.2px;line-height:17px;color:#555;white-space:pre">Документ приема</div><div class="abs" style="left:297px;top:469px;font-size:14.2px;line-height:17px;color:#555;white-space:pre">Врач</div><div class="abs" style="left:526px;top:469px;font-size:14.2px;line-height:17px;color:#555;white-space:pre">Описание</div><svg class="abs" style="left:797.7px;top:466.1px" width="24" height="24" viewBox="-12 -12 24 24"><path transform="rotate(-45) scale(.9)" d="M7.1 -3.9L-5.7 -3.9A3.8 3.8 0 0 0 -5.7 3.7L5.2 3.7A2.4 2.4 0 0 0 5.2 -1.1L-4.5 -1.1A1.2 1.2 0 0 0 -4.5 1.3L2.7 1.3" fill="none" stroke="#5f5f5f" stroke-width="1.4" stroke-linecap="round"/></svg>
<svg width="0" height="0" style="position:absolute"><defs><linearGradient id="lkg" x1="0" x2="1"><stop offset="0" stop-color="#677c91"/><stop offset=".5" stop-color="#b4c1cd"/><stop offset="1" stop-color="#677c91"/></linearGradient></defs></svg><div class="row" style="top:514px;"><svg style="position:absolute;left:8px;top:5px" width="12" height="12" viewBox="0 0 12 12"><circle cx="5.6" cy="5.6" r="4.9" fill="#fff" stroke="#bdbdbd" stroke-width="1"/><path d="M2.5 5.6 H8.7" stroke="#7c7c7c" stroke-width="1.3"/></svg><svg style="position:absolute;left:33px;top:6px" width="9" height="11.4" viewBox="0 0 9 11.4"><path d="M1.9 5.4 V3.4 A2.6 2.6 0 0 1 7.1 3.4 V5.4" fill="none" stroke="#73889b" stroke-width="1.7"/><rect x="0.3" y="4.9" width="8.4" height="6.2" rx="1.1" fill="url(#lkg)"/><path d="M3.4 10.4 V7.4 H5.6 V10.4" fill="none" stroke="#f3f6f8" stroke-width="1"/><path d="M0.6 10.9 H8.4" stroke="#5f7489" stroke-width=".7"/></svg><span style="left:55px">Прием</span><span style="left:142px;display:inline-block;transform:scaleX(.875);transform-origin:0 50%">23.06.2019 10:00</span><span style="left:270px">Денисов Дмитрий Алексеевич</span><span style="left:499px">Первичный осмотр терапевта</span></div>
<div class="row" style="top:536px;"><svg style="position:absolute;left:56px;top:6px" width="9" height="11.4" viewBox="0 0 9 11.4"><path d="M1.9 5.4 V3.4 A2.6 2.6 0 0 1 7.1 3.4 V5.4" fill="none" stroke="#73889b" stroke-width="1.7"/><rect x="0.3" y="4.9" width="8.4" height="6.2" rx="1.1" fill="url(#lkg)"/><path d="M3.4 10.4 V7.4 H5.6 V10.4" fill="none" stroke="#f3f6f8" stroke-width="1"/><path d="M0.6 10.9 H8.4" stroke="#5f7489" stroke-width=".7"/></svg><span style="left:78px">Прием</span><span style="left:142px;display:inline-block;transform:scaleX(.875);transform-origin:0 50%">24.06.2019 11:00</span><span style="left:270px">Иванова Ксения Андреевна</span><span style="left:499px">Анализ крови общий</span></div>
<div class="row" style="top:558px;"><svg style="position:absolute;left:56px;top:6px" width="9" height="11.4" viewBox="0 0 9 11.4"><path d="M1.9 5.4 V3.4 A2.6 2.6 0 0 1 7.1 3.4 V5.4" fill="none" stroke="#73889b" stroke-width="1.7"/><rect x="0.3" y="4.9" width="8.4" height="6.2" rx="1.1" fill="url(#lkg)"/><path d="M3.4 10.4 V7.4 H5.6 V10.4" fill="none" stroke="#f3f6f8" stroke-width="1"/><path d="M0.6 10.9 H8.4" stroke="#5f7489" stroke-width=".7"/></svg><span style="left:78px">Прием</span><span style="left:142px;display:inline-block;transform:scaleX(.875);transform-origin:0 50%">25.06.2019 09:00</span><span style="left:270px">Денисов Дмитрий Алексеевич</span><span style="left:499px">Повторный осмотр терапевта</span></div>
<div class="row" style="top:580px;"><svg style="position:absolute;left:56px;top:6px" width="9" height="11.4" viewBox="0 0 9 11.4"><path d="M1.9 5.4 V3.4 A2.6 2.6 0 0 1 7.1 3.4 V5.4" fill="none" stroke="#73889b" stroke-width="1.7"/><rect x="0.3" y="4.9" width="8.4" height="6.2" rx="1.1" fill="url(#lkg)"/><path d="M3.4 10.4 V7.4 H5.6 V10.4" fill="none" stroke="#f3f6f8" stroke-width="1"/><path d="M0.6 10.9 H8.4" stroke="#5f7489" stroke-width=".7"/></svg><span style="left:78px">Прием</span><span style="left:142px;display:inline-block;transform:scaleX(.875);transform-origin:0 50%">26.06.2019 12:00</span><span style="left:270px">Денисов Дмитрий Алексеевич</span><span style="left:499px">Первичный осмотр терапевта</span></div>
<div class="row" style="top:602px;"><svg style="position:absolute;left:56px;top:6px" width="9" height="11.4" viewBox="0 0 9 11.4"><path d="M1.9 5.4 V3.4 A2.6 2.6 0 0 1 7.1 3.4 V5.4" fill="none" stroke="#73889b" stroke-width="1.7"/><rect x="0.3" y="4.9" width="8.4" height="6.2" rx="1.1" fill="url(#lkg)"/><path d="M3.4 10.4 V7.4 H5.6 V10.4" fill="none" stroke="#f3f6f8" stroke-width="1"/><path d="M0.6 10.9 H8.4" stroke="#5f7489" stroke-width=".7"/></svg><span style="left:78px">Прием</span><span style="left:142px;display:inline-block;transform:scaleX(.875);transform-origin:0 50%">27.06.2019 12:00</span><span style="left:270px">Иванова Ксения Андреевна</span><span style="left:499px">Анализ крови общий</span></div>
<div class="row" style="top:624px;"><svg style="position:absolute;left:56px;top:6px" width="9" height="11.4" viewBox="0 0 9 11.4"><path d="M1.9 5.4 V3.4 A2.6 2.6 0 0 1 7.1 3.4 V5.4" fill="none" stroke="#73889b" stroke-width="1.7"/><rect x="0.3" y="4.9" width="8.4" height="6.2" rx="1.1" fill="url(#lkg)"/><path d="M3.4 10.4 V7.4 H5.6 V10.4" fill="none" stroke="#f3f6f8" stroke-width="1"/><path d="M0.6 10.9 H8.4" stroke="#5f7489" stroke-width=".7"/></svg><span style="left:78px">Прием</span><span style="left:142px;display:inline-block;transform:scaleX(.875);transform-origin:0 50%">28.06.2019 12:00</span><span style="left:270px">Денисов Дмитрий Алексеевич</span><span style="left:499px">Первичный осмотр терапевта</span></div>
<div class="row" style="top:646px;"><svg style="position:absolute;left:56px;top:6px" width="9" height="11.4" viewBox="0 0 9 11.4"><path d="M1.9 5.4 V3.4 A2.6 2.6 0 0 1 7.1 3.4 V5.4" fill="none" stroke="#73889b" stroke-width="1.7"/><rect x="0.3" y="4.9" width="8.4" height="6.2" rx="1.1" fill="url(#lkg)"/><path d="M3.4 10.4 V7.4 H5.6 V10.4" fill="none" stroke="#f3f6f8" stroke-width="1"/><path d="M0.6 10.9 H8.4" stroke="#5f7489" stroke-width=".7"/></svg><span style="left:78px">Прием</span><span style="left:142px;display:inline-block;transform:scaleX(.875);transform-origin:0 50%">29.05.2020 11:57</span><span style="left:270px">Денисов Дмитрий Алексеевич</span><span style="left:499px">24. УЗИ щитовидной железы</span></div>
<div class="row" style="top:668px;"><svg style="position:absolute;left:56px;top:6px" width="9" height="11.4" viewBox="0 0 9 11.4"><path d="M1.9 5.4 V3.4 A2.6 2.6 0 0 1 7.1 3.4 V5.4" fill="none" stroke="#73889b" stroke-width="1.7"/><rect x="0.3" y="4.9" width="8.4" height="6.2" rx="1.1" fill="url(#lkg)"/><path d="M3.4 10.4 V7.4 H5.6 V10.4" fill="none" stroke="#f3f6f8" stroke-width="1"/><path d="M0.6 10.9 H8.4" stroke="#5f7489" stroke-width=".7"/></svg><span style="left:78px">Прием</span><span style="left:142px;display:inline-block;transform:scaleX(.875);transform-origin:0 50%">27.07.2020 13:37</span><span style="left:270px">Безногов Юрий Сергеевич</span><span style="left:499px">Общий осмотр стоматолога</span></div>
<div class="row" style="top:690px;"><svg style="position:absolute;left:56px;top:6px" width="9" height="11.4" viewBox="0 0 9 11.4"><path d="M1.9 5.4 V3.4 A2.6 2.6 0 0 1 7.1 3.4 V5.4" fill="none" stroke="#73889b" stroke-width="1.7"/><rect x="0.3" y="4.9" width="8.4" height="6.2" rx="1.1" fill="url(#lkg)"/><path d="M3.4 10.4 V7.4 H5.6 V10.4" fill="none" stroke="#f3f6f8" stroke-width="1"/><path d="M0.6 10.9 H8.4" stroke="#5f7489" stroke-width=".7"/></svg><span style="left:78px">Прием</span><span style="left:142px;display:inline-block;transform:scaleX(.875);transform-origin:0 50%">18.12.2020 14:52</span><span style="left:270px">Денисов Дмитрий Алексеевич</span><span style="left:499px">Первичный осмотр терапевта; Осмотр</span><div style="position:absolute;left:756px;top:15.2px;width:6px;height:1.4px;background:#707070"></div></div>
<div class="row" style="top:712px;"><svg style="position:absolute;left:56px;top:6px" width="9" height="11.4" viewBox="0 0 9 11.4"><path d="M1.9 5.4 V3.4 A2.6 2.6 0 0 1 7.1 3.4 V5.4" fill="none" stroke="#73889b" stroke-width="1.7"/><rect x="0.3" y="4.9" width="8.4" height="6.2" rx="1.1" fill="url(#lkg)"/><path d="M3.4 10.4 V7.4 H5.6 V10.4" fill="none" stroke="#f3f6f8" stroke-width="1"/><path d="M0.6 10.9 H8.4" stroke="#5f7489" stroke-width=".7"/></svg><span style="left:78px">Прием</span><span style="left:142px;display:inline-block;transform:scaleX(.875);transform-origin:0 50%">25.02.2021 10:26</span><span style="left:270px">Денисов Дмитрий Алексеевич</span><span style="left:499px">Первичный осмотр терапевта</span></div>
<div class="row" style="top:734px;"><svg style="position:absolute;left:56px;top:6px" width="9" height="11.4" viewBox="0 0 9 11.4"><path d="M1.9 5.4 V3.4 A2.6 2.6 0 0 1 7.1 3.4 V5.4" fill="none" stroke="#73889b" stroke-width="1.7"/><rect x="0.3" y="4.9" width="8.4" height="6.2" rx="1.1" fill="url(#lkg)"/><path d="M3.4 10.4 V7.4 H5.6 V10.4" fill="none" stroke="#f3f6f8" stroke-width="1"/><path d="M0.6 10.9 H8.4" stroke="#5f7489" stroke-width=".7"/></svg><span style="left:78px">Прием</span><span style="left:142px;display:inline-block;transform:scaleX(.875);transform-origin:0 50%">26.02.2021 16:46</span><span style="left:270px">Денисов Дмитрий Алексеевич</span><span style="left:499px">Первичный осмотр терапевта; Осмотр</span><div style="position:absolute;left:756px;top:15.2px;width:6px;height:1.4px;background:#707070"></div></div>
<div class="row" style="top:756px;"><svg style="position:absolute;left:8px;top:5px" width="12" height="12" viewBox="0 0 12 12"><circle cx="5.6" cy="5.6" r="4.9" fill="#fff" stroke="#bdbdbd" stroke-width="1"/><path d="M2.5 5.6 H8.7" stroke="#7c7c7c" stroke-width="1.3"/></svg><span style="left:30px">Прием</span><span style="left:142px;display:inline-block;transform:scaleX(.875);transform-origin:0 50%">06.05.2020 16:47</span><span style="left:270px">Барбышева Евгения Петровна</span><span style="left:499px">Прием офтальмолога</span></div>
<div class="row" style="top:778px;background:linear-gradient(#fff 0,#fff 1px,#FFF2C6 1px,#FFF2C6 20px,#fff 20px);"><span style="left:53px">Прием</span><span style="left:142px;display:inline-block;transform:scaleX(.875);transform-origin:0 50%">12.03.2021 17:54</span><span style="left:270px">Денисов Дмитрий Алексеевич</span><div style="position:absolute;left:494px;top:1px;width:274px;height:19px;border:2px solid #FAC824;border-right-width:3px;background:#FFE89A"></div><div style="position:absolute;left:136px;top:0;width:1px;height:21px;background:#fff"></div><div style="position:absolute;left:263px;top:0;width:1px;height:21px;background:#fff"></div><span style="left:499px">Первичный осмотр терапевта; Осмотр</span><div style="position:absolute;left:756px;top:15.2px;width:6px;height:1.4px;background:#707070"></div></div>
<div class="row" style="top:800px;"><span style="left:53px">Прием</span><span style="left:142px;display:inline-block;transform:scaleX(.875);transform-origin:0 50%">26.03.2021 06:20</span><span style="left:270px">Денисов Дмитрий Алексеевич</span><span style="left:499px">Первичный осмотр терапевта; Осмотр</span><div style="position:absolute;left:756px;top:15.2px;width:6px;height:1.4px;background:#707070"></div><span style="left:779px;color:#3a62b8;text-decoration:underline">1</span></div>
<div class="row" style="top:822px;"><span style="left:53px">Прием</span><span style="left:142px;display:inline-block;transform:scaleX(.875);transform-origin:0 50%">02.04.2021 16:00</span><span style="left:270px">Денисов Дмитрий Алексеевич</span><span style="left:499px">Первичный осмотр терапевта; Осмотр</span><div style="position:absolute;left:756px;top:15.2px;width:6px;height:1.4px;background:#707070"></div></div>
<div class="row" style="top:844px;"><span style="left:53px">Прием</span><span style="left:142px;display:inline-block;transform:scaleX(.875);transform-origin:0 50%">01.06.2021 16:01</span><span style="left:270px">Денисов Дмитрий Алексеевич</span><span style="left:499px">Первичный осмотр терапевта; Осмотр</span><div style="position:absolute;left:756px;top:15.2px;width:6px;height:1.4px;background:#707070"></div></div>
<div class="row" style="top:866px;"><span style="left:53px">Прием</span><span style="left:142px;display:inline-block;transform:scaleX(.875);transform-origin:0 50%">09.06.2021 16:20</span><span style="left:270px">Денисов Дмитрий Алексеевич</span><span style="left:499px">Первичный осмотр терапевта; Осмотр</span><div style="position:absolute;left:756px;top:15.2px;width:6px;height:1.4px;background:#707070"></div></div>
<div class="row" style="top:888px;"><span style="left:53px">Прием</span><span style="left:142px;display:inline-block;transform:scaleX(.875);transform-origin:0 50%">11.06.2021 10:56</span><span style="left:270px">Денисов Дмитрий Алексеевич</span><span style="left:499px">Первичный осмотр терапевта</span></div>
<div class="row" style="top:910px;"><span style="left:53px">Прием</span><span style="left:142px;display:inline-block;transform:scaleX(.875);transform-origin:0 50%">17.06.2021 13:11</span><span style="left:270px">Никонова Елена Павловна</span><span style="left:499px">Ортопед</span></div>
<div class="abs" style="left:795px;top:514px;width:1px;height:423px;background:#d4d4d4"></div><div class="abs" style="left:831.4px;top:477.4px;width:0;height:0;border-left:3px solid transparent;border-right:3px solid transparent;border-bottom:4.5px solid #c6c6c6"></div><div class="abs" style="left:829px;top:494px;width:10px;height:415px;border-radius:5px;background:#dedede"></div><div class="abs" style="left:829px;top:494px;width:10px;height:376px;border-radius:5px;background:#9c9c9c"></div><div class="abs" style="left:831.4px;top:921px;width:0;height:0;border-left:3.1px solid transparent;border-right:3.1px solid transparent;border-top:5px solid #555"></div>
<svg class="abs" style="left:1680px;top:130px" width="230" height="38" viewBox="1680 130 230 38"><g fill="none" stroke="#6e6e6e" stroke-width="1.25" stroke-linejoin="round"><rect x="1690.3" y="140.5" width="17.5" height="16" rx="1.6"/><path d="M1693.8 140.6 V148.1 H1704.2 V140.6 M1696.2 143.1 H1701.9 M1696.2 145.6 H1701.9"/><path d="M1695.2 156.4 V152.5 H1703 V156.4"/><path d="M1731.2 143.4 V139.6 H1743 V143.4"/><path d="M1731.2 155.6 H1729 A1.8 1.8 0 0 1 1727.2 153.8 V145.3 A1.8 1.8 0 0 1 1729 143.5 H1745.1 A1.8 1.8 0 0 1 1746.9 145.3 V153.8 A1.8 1.8 0 0 1 1745.1 155.6 H1743"/><path d="M1731.2 148.7 H1743 V158.3 H1731.2 Z M1733.4 152.9 H1741 M1733.4 155.5 H1737 M1738.6 146.4 H1740.9 M1742.6 146.4 H1744.9"/><path d="M1772.4 157.5 H1767 A1.5 1.5 0 0 1 1765.5 156 V141.4 A1.5 1.5 0 0 1 1767 139.9 H1778.8 A1.5 1.5 0 0 1 1780.3 141.4 V146"/><circle cx="1776.5" cy="150.4" r="3.6" stroke-width="1.3"/><g transform="translate(1811.5 147.8) rotate(-45)" stroke-width="1.4" stroke-linecap="round"><path d="M2.9 -4.3 H6 A4.3 4.3 0 0 1 6 4.3 H2.5 M-2.9 4.3 H-6 A4.3 4.3 0 0 1 -6 -4.3 H-2.5 M-3.9 0 H3.9"/></g></g><rect x="1699.4" y="152.6" width="3.6" height="3.8" fill="#6e6e6e"/><path d="M1779.2 153.3 L1782.8 157.4" stroke="#6e6e6e" stroke-width="2"/><g fill="#5c5c5c"><circle cx="1848.5" cy="142.1" r="1.6"/><circle cx="1848.5" cy="147.6" r="1.6"/><circle cx="1848.5" cy="153.1" r="1.6"/></g><path d="M1882.2 143.9 L1890.2 151.9 M1890.2 143.9 L1882.2 151.9" stroke="#4a4a4a" stroke-width="1.5" fill="none"/></svg>
<div class="abs" style="left:860px;top:175px;width:0;height:769px;border-left:1px dashed #cdcdcd"></div><div class="abs" style="left:865px;top:175px;width:1032px;height:770px;border:1px solid #a9a9a9;background:#fff"></div><div class="abs" style="left:1875px;top:212px;width:21px;height:705px;background:#fafafa"></div><div class="abs" style="left:1875px;top:212px;width:21px;height:218px;background:#cbcbcb"></div><div class="abs" style="left:1881px;top:197px;width:0;height:0;border-left:4px solid transparent;border-right:4px solid transparent;border-bottom:4px solid #333"></div><div class="abs" style="left:1882px;top:931px;width:0;height:0;border-left:4px solid transparent;border-right:4px solid transparent;border-top:4px solid #555"></div>
<div class="abs" id="h1" style="left:877px;top:186.5px;font-family:'Liberation Serif',serif;font-style:italic;font-size:16.7px;line-height:20px;color:#9a9a9a;white-space:pre">12.03.2021 17:54 Первичный осмотр терапевта</div><div class="abs" id="h2" style="right:45px;top:186.5px;font-family:'Liberation Serif',serif;font-style:italic;font-size:16.7px;line-height:20px;color:#9a9a9a;white-space:pre">Денисов Дмитрий Алексеевич</div>
<svg class="abs" style="left:876px;top:226px" width="40" height="40" viewBox="0 0 40 40"><defs><linearGradient id="lg" x1="0" y1="0" x2="0" y2="1"><stop offset="0" stop-color="#5380c8"/><stop offset=".5" stop-color="#3d5cb2"/><stop offset="1" stop-color="#25339a"/></linearGradient></defs><rect x="0" y="0" width="40" height="40" rx="5.2" fill="url(#lg)"/><path d="M6.9 16.2 L20.2 7.5 L33.7 16.2" fill="none" stroke="#fff" stroke-width="1.8"/><path d="M7.8 18.5 L20.2 11 L32 18.5 V31 A2.1 2.1 0 0 1 29.9 33.1 H9.9 A2.1 2.1 0 0 1 7.8 31 Z" fill="#fff"/><path d="M18.2 18 H21.8 V22.1 H26 V25.8 H21.8 V29.9 H18.2 V25.8 H14.2 V22.1 H18.2 Z" fill="#3558ad"/></svg><div class="abs" id="hd1" style="left:924px;top:239.5px;font-family:'Liberation Serif',serif;font-weight:bold;font-size:30px;line-height:34px;color:#000;white-space:pre">Центроклиник Мультимед.</div><div class="abs" id="hd2" style="left:1305px;top:245.8px;font-family:'Liberation Serif',serif;font-weight:bold;font-size:22.7px;line-height:26px;color:#000;white-space:pre">Терапевтическое отделение</div>
<div class="dl" id="dc" style="left:1247px;top:293px">Протокол осмотра</div>
<div class="dl" id="d0" style="left:876px;top:318px;letter-spacing:-0.014px;"><u><i>Дата</i></u>: 12.03.2021, <u><i>Пациент</i></u>: Антонова Ирина Александровна</div>
<div class="dl" id="d1" style="left:876px;top:368px;letter-spacing:-0.004px;"><u><i>Жалобы</i></u>: температура тела 38,5 – 39,50 С, инфекционный токсикоз ярко выражен: головная боль,</div>
<div class="dl" id="d2" style="left:876px;top:393px;letter-spacing:0.040px;">головокружение, слабость, потливость, адинамия, суставные и мышечные боли. Катаральный синдром:</div>
<div class="dl" id="d3" style="left:876px;top:418px;letter-spacing:-0.009px;">сухой или влажный болезненный кашель, боль за грудиной, боль в горле, насморк.</div>
<div class="dl" id="d4" style="left:876px;top:443px;letter-spacing:-0.073px;"><u><i>Анамнез</i></u>: Считает себя больным с 10.03</div>
<div class="dl" id="d5" style="left:1230px;top:493px;letter-spacing:0.043px;"><u><i>Объективный статус</i></u></div>
<div class="dl" id="d6" style="left:876px;top:543px;letter-spacing:-0.001px;"><u>Общее состояние</u>: ближе к удовлетворительному. <u>Положение</u>: активное.</div>
<div class="dl" id="d7" style="left:876px;top:568px;letter-spacing:0.148px;"><u>Сознание</u>:</div>
<div class="dl" id="d8" style="left:1032px;top:568px;letter-spacing:0.016px;">ясное.</div>
<div class="dl" id="d9" style="left:876px;top:618px;letter-spacing:0.042px;"><u>Телосложение</u>: астеник, нормальное развитие  подкожножировой клетчатки.</div>
<div class="dl" id="d10" style="left:876px;top:643px;letter-spacing:-0.051px;"><u>Кожа</u>: обычной окраски, влажность: нормальная.</div>
<div class="dl" id="d11" style="left:876px;top:693px;letter-spacing:-0.040px;"><u>Костно-суставная система</u>: без видимых деформаций.</div>
<div class="dl" id="d12" style="left:876px;top:718px;letter-spacing:-0.072px;"><u>Болезненность паравертебральных точек</u>: отсутствует.</div>
<div class="dl" id="d13" style="left:876px;top:743px;letter-spacing:-0.008px;"><b>Данные осмотра:</b></div>
<div class="dl" id="d14" style="left:881px;top:768px;letter-spacing:-0.077px;"><u>Щитовидная железа</u>: не увеличена, мягкая, безболезненная. <u>Лимфоузлы</u>: не увеличены, безболезненные.</div>
<div class="dl" id="d15" style="left:881px;top:793px;letter-spacing:-0.032px;"><u>Грудная клетка</u>: обычной формы. <u>Хрипы</u>: не выслушиваются. <u>Границы сердца</u>: , <u>ритм</u>: правильный,</div>
<div class="dl" id="d16" style="left:876px;top:818px;letter-spacing:-0.101px;"><u>тоны сердца</u>: ясные. <u>ЧСС в минуту</u>: , <u>АД</u>:  \  мм рт. ст. <u>Шумы сердца</u>: не выслушиваются.</div>
<div class="dl" id="d17" style="left:876px;top:868px;letter-spacing:0.061px;">1. Диагноз: [J10.1] Грипп с другими респираторными проявлениями, вирус гриппа идентифицирован</div>
<div class="dl" id="d18" style="left:876px;top:893px;letter-spacing:-0.011px;">Описание: J 10.1 Грипп. Гриппозная острая респираторная инфекция верхних дыхательных путей. Вирус</div>
<div class="dl" id="d19" style="left:876px;top:918px;letter-spacing:-0.074px;">A/H1N1/09. Нетяжелая форма. неосложненное течение.</div>
<div class="abs" style="left:0;top:961px;width:1919px;height:69px;background:#f2f2f2;border-top:1px solid #bdbdbd"></div><div class="abs" style="left:364px;top:962px;width:247px;height:68px;background:#fff;border-left:1px solid #c6c6c6;border-right:1px solid #c6c6c6"></div><div class="abs" style="left:368px;top:1024.5px;width:239px;height:2px;background:#0a9a50"></div><div class="abs" style="left:215px;top:962px;width:1px;height:68px;background:#c6c6c6"></div><svg class="abs" style="left:11px;top:985px" width="20" height="18" viewBox="0 0 20 18"><path d="M10.3 1 L19.4 9.3 H16.7 V16.1 H12.3 V10.9 H8.3 V16.1 H3.7 V9.3 H1.2 Z" fill="#484848"/></svg><div class="bt" style="left:44px;top:986.3px">Начальная страница</div><div class="bt" style="left:228px;top:986.3px">Приёмы врача</div><svg class="abs" style="left:345px;top:990.3px" width="10" height="10" viewBox="0 0 10 10"><path d="M1 1 L9 9 M9 1 L1 9" stroke="#444" stroke-width="2.1" fill="none"/></svg><div class="bt" style="left:377px;top:986.3px">Просмотр медицинских карт</div><svg class="abs" style="left:591px;top:990.3px" width="10" height="10" viewBox="0 0 10 10"><path d="M1 1 L9 9 M9 1 L1 9" stroke="#444" stroke-width="2.1" fill="none"/></svg>
<div class="abs" style="left:959px;top:962px;width:960px;height:68px;background:#fff;border-left:1px solid #bdbdbd"></div><svg class="abs" style="left:980px;top:983px" width="22" height="22" viewBox="0 0 22 22"><path d="M11 2 L13.6 8.2 L20.2 8.8 L15.2 13.1 L16.7 19.6 L11 16.2 L5.3 19.6 L6.8 13.1 L1.8 8.8 L8.4 8.2 Z" fill="none" stroke="#444" stroke-width="1.3" stroke-linejoin="round"/></svg><div class="bl" style="left:1023px;top:976px;line-height:19px">Запуск синхронизации</div><div class="bl" style="left:1219px;top:976px;line-height:19px">Заявки на<br>техобслуживание</div><div class="bl" style="left:1377px;top:976px;line-height:19px">Рассылки SMS-сообщений</div><div class="bl" style="left:1607px;top:976px;line-height:19px">Анализ обращений</div><div class="bl" style="left:1777px;top:976px;line-height:19px">Основной</div>
</body></html>
